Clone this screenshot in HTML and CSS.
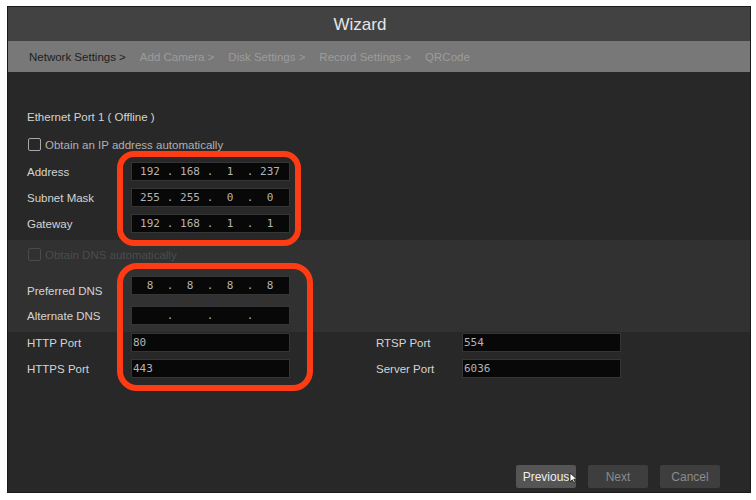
FILE: index.html
```html
<!DOCTYPE html>
<html lang="en">
<head>
    <meta charset="UTF-8">
    <title>Wizard</title>
    <link rel="stylesheet" href="styles.css">
</head>
<body>
    <div class="wizard">
        <div class="title">Wizard</div>
        <div class="steps">
            <span class="step active">Network Settings &gt;</span>
            <span class="step">Add Camera &gt;</span>
            <span class="step">Disk Settings &gt;</span>
            <span class="step">Record Settings &gt;</span>
            <span class="step">QRCode</span>
        </div>
        <div class="content">
            <div class="section first">
                <div class="port-name">Ethernet Port 1 ( Offline )</div>
                <div class="check"><span class="box"></span>Obtain an IP address automatically</div>
                <div class="row">
                    <span class="lbl">Address</span>
                    <div class="field ip"><span>192</span><i>.</i><span>168</span><i>.</i><span>1</span><i>.</i><span>237</span></div>
                </div>
                <div class="row">
                    <span class="lbl">Subnet Mask</span>
                    <div class="field ip"><span>255</span><i>.</i><span>255</span><i>.</i><span>0</span><i>.</i><span>0</span></div>
                </div>
                <div class="row">
                    <span class="lbl">Gateway</span>
                    <div class="field ip"><span>192</span><i>.</i><span>168</span><i>.</i><span>1</span><i>.</i><span>1</span></div>
                </div>
            </div>
            <div class="section band">
                <div class="check disabled"><span class="box"></span>Obtain DNS automatically</div>
                <div class="row dns-first">
                    <span class="lbl">Preferred DNS</span>
                    <div class="field ip"><span>8</span><i>.</i><span>8</span><i>.</i><span>8</span><i>.</i><span>8</span></div>
                </div>
                <div class="row dns-second">
                    <span class="lbl">Alternate DNS</span>
                    <div class="field ip"><span></span><i>.</i><span></span><i>.</i><span></span><i>.</i><span></span></div>
                </div>
            </div>
            <div class="section ports">
                <div class="row">
                    <span class="lbl">HTTP Port</span>
                    <div class="field text">80</div>
                    <span class="lbl right">RTSP Port</span>
                    <div class="field text">554</div>
                </div>
                <div class="row">
                    <span class="lbl">HTTPS Port</span>
                    <div class="field text">443</div>
                    <span class="lbl right">Server Port</span>
                    <div class="field text">6036</div>
                </div>
            </div>
            <div class="buttons">
                <button class="btn current">Previous</button>
                <button class="btn">Next</button>
                <button class="btn">Cancel</button>
            </div>
        </div>
        <div class="mark mark-ip"></div>
        <div class="mark mark-dns"></div>
        <svg class="pointer" width="9" height="12" viewBox="0 0 9 12">
            <path d="M1 1 L1 10 L3.3 7.8 L5 11 L6.4 10.3 L4.8 7.2 L8 7.2 Z" fill="#fff" stroke="#111" stroke-width="0.8"/>
        </svg>
    </div>
</body>
</html>
```

FILE: styles.css
```css
body {
    margin: 0;
    background-color: #fff;
    font-family: "Liberation Sans", Arial, sans-serif;
}
.wizard {
    position: relative;
    margin: 6px 0 0 7px;
    width: 744px;
    height: 487px;
    box-sizing: border-box;
    border: 1px solid #1a1a1a;
    background-color: #282828;
    display: flex;
    flex-direction: column;
}
.title {
    height: 34px;
    line-height: 36px;
    padding-right: 38px;
    background-color: #424242;
    color: #e6e6e6;
    font-size: 17px;
    text-align: center;
}
.steps {
    height: 31px;
    background-color: #787878;
    display: flex;
    align-items: center;
    gap: 14px;
    padding-left: 21px;
    font-size: 11.5px;
}
.step {
    color: #9c9c9c;
}
.step.active {
    color: #1e1e1e;
}
.content {
    flex: 1;
    display: flex;
    flex-direction: column;
    font-size: 11.5px;
    color: #d4d4d4;
}
.section {
    padding-left: 19px;
}
.first {
    padding-top: 39px;
    padding-bottom: 7px;
}
.port-name {
    line-height: 13px;
    margin-bottom: 14px;
}
.check {
    display: flex;
    align-items: center;
    height: 13px;
    color: #b0b0b0;
}
.box {
    width: 11px;
    height: 11px;
    border: 1px solid #a8a8a8;
    border-radius: 2px;
    margin: 0 4px 0 1px;
}
.check.disabled {
    color: #4c4c4c;
}
.check.disabled .box {
    border-color: #4a4a4a;
}
.row {
    display: flex;
    align-items: center;
    height: 19px;
    margin-top: 7px;
}
.first .check + .row {
    margin-top: 11px;
}
.lbl {
    width: 104px;
}
.lbl.right {
    width: 86px;
    margin-left: 86px;
}
.field {
    width: 159px;
    height: 19px;
    box-sizing: border-box;
    background-color: #080808;
    border: 1px solid #353535;
    color: #b4b4b4;
    font-family: "DejaVu Sans Mono", "Liberation Mono", monospace;
    font-size: 11px;
}
.ip {
    display: flex;
    align-items: center;
    padding-left: 2px;
}
.ip span {
    width: 32px;
    text-align: center;
}
.ip i {
    width: 8px;
    font-style: normal;
    text-align: center;
}
.text {
    display: flex;
    align-items: center;
    padding-left: 1px;
}
.band {
    background-color: #313131;
    padding-top: 8px;
    padding-bottom: 7px;
}
.band .dns-first {
    margin-top: 15px;
}
.band .dns-first .lbl {
    padding-top: 11px;
}
.band .dns-second {
    margin-top: 11px;
}
.ports {
    padding-top: 1px;
}
.ports .row:first-child {
    margin-top: 0;
}
.buttons {
    margin-top: auto;
    padding: 0 30px 4px 0;
    display: flex;
    justify-content: flex-end;
    gap: 12px;
}
.btn {
    width: 60px;
    height: 23px;
    border: none;
    border-radius: 2px;
    background-color: #3e3e3e;
    color: #8a8a8a;
    font-family: "Liberation Sans", Arial, sans-serif;
    font-size: 12px;
    padding: 0;
}
.btn.current {
    background-color: #555;
    color: #eee;
}
.mark {
    position: absolute;
    border: 6px solid #ff3b14;
    box-sizing: border-box;
}
.mark-ip {
    left: 109px;
    top: 144px;
    width: 184px;
    height: 95px;
    border-radius: 17px;
}
.mark-dns {
    left: 109px;
    top: 256px;
    width: 196px;
    height: 128px;
    border-radius: 20px;
}
.pointer {
    position: absolute;
    left: 561px;
    top: 465px;
}
```
